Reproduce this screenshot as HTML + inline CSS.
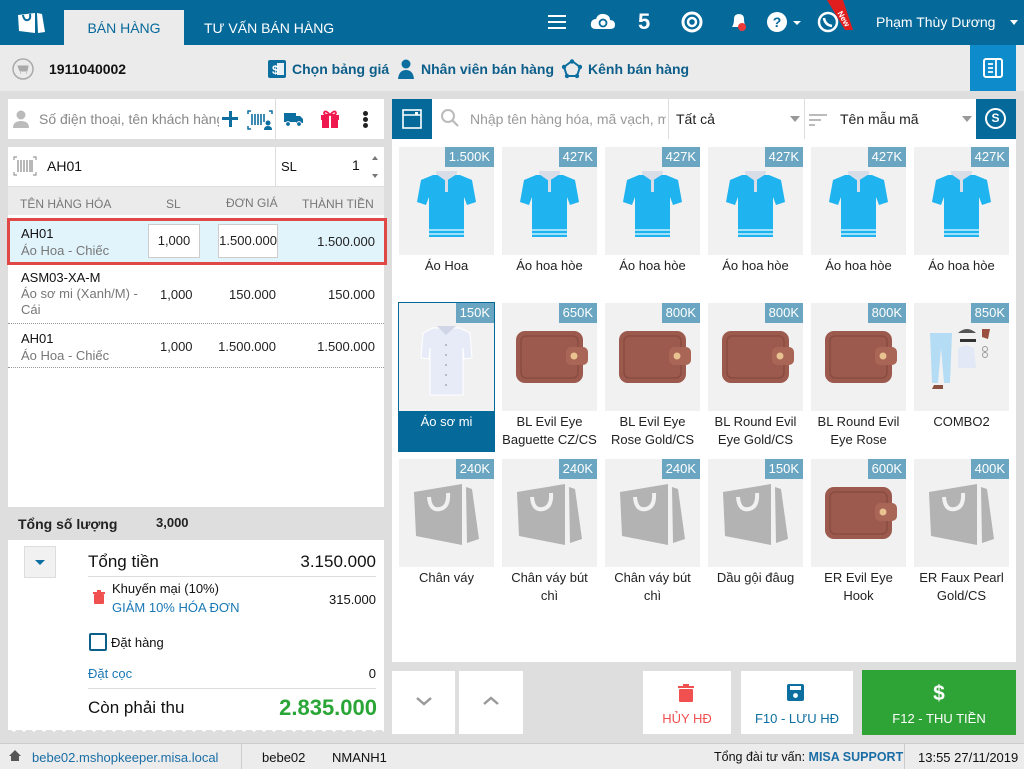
<!DOCTYPE html>
<html><head><meta charset="utf-8">
<style>
*{box-sizing:border-box;margin:0;padding:0}
body{width:1024px;height:769px;position:relative;overflow:hidden;background:#dedede;font-family:"Liberation Sans",sans-serif;font-size:13px;color:#222}
.a{position:absolute}
.hdr{left:0;top:0;width:1024px;height:45px;background:#05699a}
.t{white-space:nowrap}
.tile{position:absolute;width:95px;height:108px;background:#f1f1f1}
.tile .p{position:absolute;right:0;top:0;background:#6aa6c1;color:#fff;font-size:13px;padding:2px 4px;height:20px;line-height:16px}
.lbl{position:absolute;width:103px;text-align:center;font-size:13px;line-height:18px;color:#222}
</style></head><body>
<svg width="0" height="0" style="position:absolute">
<defs>
<symbol id="shirt" viewBox="0 0 95 108">
<path d="M34 28 L22 33 L18 55 L27 58 L30 50 L30 90 L65 90 L65 50 L68 58 L77 55 L73 33 L61 28 Z" fill="#1fb3ef"/>
<path d="M37 27 L47 34 L58 27 L58 24 L37 24Z" fill="#d8dde8"/>
<rect x="46" y="33" width="3" height="12" fill="#d8dde8"/>
<rect x="30" y="82" width="35" height="2" fill="#9fe0fa"/>
<rect x="30" y="86" width="35" height="2" fill="#9fe0fa"/>
</symbol>
<symbol id="wallet" viewBox="0 0 95 108">
<rect x="14" y="28" width="67" height="52" rx="9" fill="#9b5a4d"/>
<rect x="19" y="33" width="57" height="42" rx="5" fill="none" stroke="#8a4c40" stroke-width="1.5"/>
<rect x="64" y="44" width="22" height="18" rx="5" fill="#a96556"/>
<circle cx="72" cy="53" r="3.5" fill="#e8c28f"/>
</symbol>
<symbol id="bag" viewBox="0 0 95 108">
<path d="M15 33 L63 25 L63 86 L17 77Z" fill="#b3b3b3"/>
<path d="M67 28 L73 30 L80 80 L68 84Z" fill="#b3b3b3"/>
<path d="M30 38 Q31 52 41 50 Q50 48 49 34" fill="none" stroke="#f1f1f1" stroke-width="4"/>
</symbol>
</defs></svg>

<div class="a hdr"></div>
<svg class="a" style="left:18px;top:12px" width="28" height="22" viewBox="0 0 28 22"><path d="M0 3 L17 1 L17 21 L1 19Z" fill="#fff"/><path d="M19 1 L24 2 L27 20 L20 21Z" fill="#fff"/><path d="M5 3 Q6 9 10 8 Q13 7 12 2" fill="none" stroke="#05699a" stroke-width="2"/></svg>
<div class="a" style="left:64px;top:10px;width:120px;height:35px;background:#ebebeb;color:#05699a;font-size:14px;text-align:center;line-height:36px">BÁN HÀNG</div>
<div class="a t" style="left:204px;top:10px;color:#fff;font-size:14px;line-height:36px">TƯ VẤN BÁN HÀNG</div>
<div class="a" style="left:548px;top:15px;width:18px;height:2px;background:#fff;box-shadow:0 6px #fff,0 12px #fff"></div>
<svg class="a" style="left:590px;top:10px" width="26" height="24" viewBox="0 0 26 24"><path d="M6 19 Q0 19 1 13 Q2 9 6 9 Q8 3 14 4 Q20 5 20 10 Q25 10 25 15 Q25 19 20 19Z" fill="#fff"/><circle cx="13" cy="13" r="3.5" fill="none" stroke="#05699a" stroke-width="1.8"/></svg>
<div class="a" style="left:638px;top:9px;color:#fff;font-size:22px;font-weight:bold;line-height:26px">5</div>
<svg class="a" style="left:681px;top:11px" width="22" height="22" viewBox="0 0 22 22"><circle cx="11" cy="11" r="9" fill="none" stroke="#fff" stroke-width="3"/><circle cx="11" cy="11" r="4" fill="none" stroke="#fff" stroke-width="2.5"/></svg>
<svg class="a" style="left:728px;top:10px" width="22" height="22" viewBox="0 0 22 22"><path d="M4 17 Q6 14 6 9 Q6 4 11 4 Q16 4 16 9 Q16 14 18 17Z" fill="#fff"/><circle cx="14" cy="17" r="4" fill="#f03a3a"/></svg>
<svg class="a" style="left:766px;top:11px" width="22" height="22" viewBox="0 0 22 22"><circle cx="11" cy="11" r="10" fill="#fff"/><text x="11" y="16" text-anchor="middle" font-family="Liberation Sans" font-weight="bold" font-size="14" fill="#05699a">?</text></svg>
<div class="a" style="left:793px;top:21px;border:4px solid transparent;border-top:4px solid #fff"></div>
<svg class="a" style="left:815px;top:0" width="40" height="36" viewBox="0 0 40 36"><circle cx="13" cy="22" r="9" fill="none" stroke="#fff" stroke-width="2.5"/><path d="M9 18 Q10 25 17 26" stroke="#fff" stroke-width="2.5" fill="none"/><path d="M12 0 L28 0 L38 30 L30 30Z" fill="#e01e1e"/><text x="24" y="14" font-size="8" font-weight="bold" fill="#fff" font-family="Liberation Sans" transform="rotate(60 24 12)">New</text></svg>
<div class="a t" style="left:876px;top:14px;color:#fff;font-size:14px">Phạm Thùy Dương</div>
<div class="a" style="left:1010px;top:20px;border:4px solid transparent;border-top:5px solid #fff"></div>

<div class="a" style="left:0;top:45px;width:1024px;height:46px;background:#ebebeb"></div>
<svg class="a" style="left:12px;top:58px" width="22" height="22" viewBox="0 0 22 22"><circle cx="11" cy="11" r="10" fill="none" stroke="#aaa" stroke-width="1.5"/><path d="M6 8 L16 8 L15 13 L8 13Z M8 15 h1 M14 15 h1" stroke="#aaa" fill="#aaa"/></svg>
<div class="a t" style="left:49px;top:61px;font-size:14px;font-weight:bold;color:#111">1911040002</div>
<svg class="a" style="left:268px;top:60px" width="18" height="18"><rect width="18" height="18" rx="2" fill="#0d6ea0"/><rect x="9" y="3" width="7" height="12" fill="#fff" opacity=".9"/><text x="4" y="14" font-size="12" fill="#fff" font-weight="bold" font-family="Liberation Sans">$</text></svg>
<div class="a t" style="left:292px;top:61px;font-size:14px;color:#0d5e8a;font-weight:bold;">Chọn bảng giá</div>
<svg class="a" style="left:398px;top:59px" width="16" height="20"><circle cx="8" cy="5" r="4.5" fill="#0d6ea0"/><path d="M0 20 Q1 11 8 11 Q15 11 16 20Z" fill="#0d6ea0"/></svg>
<div class="a t" style="left:421px;top:61px;font-size:14px;color:#0d5e8a;font-weight:bold">Nhân viên bán hàng</div>
<svg class="a" style="left:562px;top:59px" width="20" height="20"><path d="M10 2 L18 8 L15 17 L5 17 L2 8Z" fill="none" stroke="#0d6ea0" stroke-width="2"/><circle cx="10" cy="2.5" r="2.2" fill="#0d6ea0"/><circle cx="18" cy="8" r="2.2" fill="#0d6ea0"/><circle cx="15" cy="17" r="2.2" fill="#0d6ea0"/><circle cx="5" cy="17" r="2.2" fill="#0d6ea0"/><circle cx="2" cy="8" r="2.2" fill="#0d6ea0"/></svg>
<div class="a t" style="left:588px;top:61px;font-size:14px;color:#0d5e8a;font-weight:bold">Kênh bán hàng</div>
<div class="a" style="left:970px;top:45px;width:46px;height:46px;background:#0d8bcb"></div>
<svg class="a" style="left:983px;top:58px" width="20" height="20"><rect x="1" y="1" width="18" height="18" rx="2" fill="none" stroke="#fff" stroke-width="2"/><path d="M13 1 V19 M5 6 H10 M5 10 H10 M5 14 H10" stroke="#fff" stroke-width="1.8"/></svg>

<!-- left panel -->
<div class="a" style="left:8px;top:99px;width:376px;height:40px;background:#fff"></div>
<div class="a" style="left:275px;top:99px;width:1px;height:40px;background:#ddd"></div>
<svg class="a" style="left:13px;top:110px" width="16" height="18"><circle cx="8" cy="5" r="4.5" fill="#bbb"/><path d="M0 18 Q0 11 8 11 Q16 11 16 18Z" fill="#bbb"/></svg>
<div class="a t" style="left:39px;top:111px;color:#888;font-size:14px;width:180px;overflow:hidden">Số điện thoại, tên khách hàng</div>
<div class="a" style="left:222px;top:117px;width:16px;height:3px;background:#0d6ea0"></div>
<div class="a" style="left:228.5px;top:111px;width:3px;height:16px;background:#0d6ea0"></div>
<svg class="a" style="left:247px;top:110px" width="26" height="20"><path d="M1 4 V1 H4 M1 16 V19 H4 M22 1 H25 V4" stroke="#0d6ea0" fill="none" stroke-width="1.5"/><path d="M5 4 V15 M8 4 V15 M11 4 V15 M14 4 V15 M17 4 V12" stroke="#0d6ea0" stroke-width="1.6"/><circle cx="21" cy="13" r="2.5" fill="#0d6ea0"/><path d="M17 20 Q17 16 21 16 Q25 16 25 20Z" fill="#0d6ea0"/></svg>
<svg class="a" style="left:284px;top:112px" width="20" height="15"><rect x="0" y="1" width="12" height="9" fill="#0d6ea0"/><path d="M12 4 H16 L19 7 V11 H12Z" fill="#0d6ea0"/><circle cx="4" cy="12" r="2.4" fill="#0d6ea0" stroke="#fff"/><circle cx="15" cy="12" r="2.4" fill="#0d6ea0" stroke="#fff"/></svg>
<svg class="a" style="left:320px;top:109px" width="20" height="19"><rect x="1" y="6" width="18" height="5" fill="#f0194f"/><rect x="2" y="11" width="16" height="8" fill="#f0194f"/><rect x="9" y="6" width="2" height="13" fill="#fff"/><path d="M10 6 Q5 0 4 4 Q4 6 10 6 Q15 0 16 4 Q16 6 10 6" fill="none" stroke="#f0194f" stroke-width="1.8"/></svg>
<div class="a" style="left:363px;top:111px;width:5px;height:5px;border-radius:50%;background:#222;box-shadow:0 6px #222,0 12px #222"></div>

<div class="a" style="left:8px;top:147px;width:376px;height:360px;background:#fff"></div>
<div class="a" style="left:275px;top:147px;width:1px;height:39px;background:#ddd"></div>
<svg class="a" style="left:13px;top:156px" width="24" height="20"><path d="M1 4 V1 H4 M1 16 V19 H4 M20 1 H23 V4 M20 19 H23 V16" stroke="#999" fill="none" stroke-width="1.2"/><path d="M5 4 V16 M8 4 V16 M11 4 V16 M14 4 V16 M17 4 V16 M19 4 V16" stroke="#999" stroke-width="1.4"/></svg>
<div class="a t" style="left:47px;top:158px;font-size:14px;color:#111">AH01</div>
<div class="a t" style="left:281px;top:159px;font-size:13px;color:#111">SL</div>
<div class="a t" style="left:352px;top:157px;font-size:14px;color:#111">1</div>
<div class="a" style="left:372px;top:153px;border:3px solid transparent;border-bottom:4px solid #777"></div>
<div class="a" style="left:372px;top:174px;border:3px solid transparent;border-top:4px solid #777"></div>
<div class="a" style="left:8px;top:186px;width:376px;height:29px;background:#ebebeb;border-top:1px solid #ddd"></div>
<div class="a t" style="left:20px;top:197px;font-size:12px;color:#777">TÊN HÀNG HÓA</div>
<div class="a t" style="left:166px;top:197px;font-size:12px;color:#777">SL</div>
<div class="a t" style="left:226px;top:196px;font-size:12px;color:#777">ĐƠN GIÁ</div>
<div class="a t" style="left:302px;top:197px;font-size:12px;color:#777">THÀNH TIỀN</div>
<div class="a" style="left:7px;top:218px;width:380px;height:47px;background:#e1f4fc;border:3px solid #e04848"></div>
<div class="a t" style="left:21px;top:226px;font-size:13px;color:#111">AH01</div>
<div class="a t" style="left:21px;top:243px;font-size:13px;color:#777">Áo Hoa - Chiếc</div>
<div class="a" style="left:148px;top:224px;width:52px;height:34px;background:#fff;border:1px solid #ccc;text-align:center;line-height:32px;font-size:13px">1,000</div>
<div class="a" style="left:218px;top:224px;width:60px;height:34px;background:#fff;border:1px solid #ccc;text-align:right;line-height:32px;font-size:13px">1.500.000</div>
<div class="a t" style="left:300px;top:234px;width:75px;text-align:right;font-size:13px">1.500.000</div>
<div class="a t" style="left:21px;top:270px;font-size:13px;color:#111">ASM03-XA-M</div>
<div class="a" style="left:21px;top:286px;font-size:13px;color:#777;line-height:16px;width:120px">Áo sơ mi (Xanh/M) - Cái</div>
<div class="a t" style="left:160px;top:287px;font-size:13px">1,000</div>
<div class="a t" style="left:200px;top:287px;width:76px;text-align:right;font-size:13px">150.000</div>
<div class="a t" style="left:300px;top:287px;width:75px;text-align:right;font-size:13px">150.000</div>
<div class="a" style="left:8px;top:323px;width:376px;border-top:1px dotted #999"></div>
<div class="a t" style="left:21px;top:331px;font-size:13px;color:#111">AH01</div>
<div class="a t" style="left:21px;top:348px;font-size:13px;color:#777">Áo Hoa - Chiếc</div>
<div class="a t" style="left:160px;top:339px;font-size:13px">1,000</div>
<div class="a t" style="left:200px;top:339px;width:76px;text-align:right;font-size:13px">1.500.000</div>
<div class="a t" style="left:300px;top:339px;width:75px;text-align:right;font-size:13px">1.500.000</div>
<div class="a" style="left:8px;top:367px;width:376px;border-top:1px dotted #999"></div>

<div class="a t" style="left:18px;top:516px;font-size:14px;font-weight:bold;color:#222">Tổng số lượng</div>
<div class="a t" style="left:156px;top:515px;font-size:13px;font-weight:bold;color:#222">3,000</div>
<div class="a" style="left:8px;top:540px;width:376px;height:190px;background:#fff"></div>
<svg class="a" style="left:8px;top:728px" width="376" height="8"><path d="M0 0 H376 V4 L371 0 L366 4 L361 0 L356 4 L351 0 L346 4 L341 0 L336 4 L331 0 L326 4 L321 0 L316 4 L311 0 L306 4 L301 0 L296 4 L291 0 L286 4 L281 0 L276 4 L271 0 L266 4 L261 0 L256 4 L251 0 L246 4 L241 0 L236 4 L231 0 L226 4 L221 0 L216 4 L211 0 L206 4 L201 0 L196 4 L191 0 L186 4 L181 0 L176 4 L171 0 L166 4 L161 0 L156 4 L151 0 L146 4 L141 0 L136 4 L131 0 L126 4 L121 0 L116 4 L111 0 L106 4 L101 0 L96 4 L91 0 L86 4 L81 0 L76 4 L71 0 L66 4 L61 0 L56 4 L51 0 L46 4 L41 0 L36 4 L31 0 L26 4 L21 0 L16 4 L11 0 L6 4 L0 0Z" fill="#fff"/></svg>
<div class="a" style="left:24px;top:546px;width:32px;height:32px;background:#f1f1f1;border:1px solid #ddd"></div>
<div class="a" style="left:35px;top:560px;border:5px solid transparent;border-top:5px solid #0d6ea0"></div>
<div class="a t" style="left:88px;top:552px;font-size:17px;color:#111">Tổng tiền</div>
<div class="a t" style="left:270px;top:552px;width:106px;text-align:right;font-size:17px;color:#111">3.150.000</div>
<div class="a" style="left:88px;top:576px;width:288px;border-top:1px solid #ddd"></div>
<svg class="a" style="left:93px;top:590px" width="12" height="14"><rect x="0" y="2" width="12" height="2" fill="#f05050"/><rect x="4" y="0" width="4" height="2" fill="#f05050"/><rect x="1" y="4" width="10" height="10" rx="1" fill="#f05050"/></svg>
<div class="a t" style="left:112px;top:581px;font-size:13px;color:#111">Khuyến mại (10%)</div>
<div class="a t" style="left:112px;top:600px;font-size:13px;color:#1a78b5">GIẢM 10% HÓA ĐƠN</div>
<div class="a t" style="left:300px;top:592px;width:76px;text-align:right;font-size:13px;color:#111">315.000</div>
<div class="a" style="left:89px;top:633px;width:18px;height:18px;border:2px solid #0d5e8a;border-radius:2px"></div>
<div class="a t" style="left:111px;top:635px;font-size:13px;color:#111">Đặt hàng</div>
<div class="a t" style="left:88px;top:666px;font-size:13px;color:#1a78b5">Đặt cọc</div>
<div class="a t" style="left:300px;top:666px;width:76px;text-align:right;font-size:13px;color:#111">0</div>
<div class="a" style="left:88px;top:688px;width:288px;border-top:1px solid #ddd"></div>
<div class="a t" style="left:88px;top:698px;font-size:17px;color:#111">Còn phải thu</div>
<div class="a t" style="left:230px;top:695px;width:147px;text-align:right;font-size:22px;font-weight:bold;color:#2aa636">2.835.000</div>

<!-- right panel -->
<div class="a" style="left:392px;top:99px;width:624px;height:40px;background:#fff"></div>
<div class="a" style="left:392px;top:99px;width:40px;height:40px;background:#05699a"></div>
<svg class="a" style="left:402px;top:109px" width="20" height="20"><rect x="1" y="1" width="18" height="18" fill="none" stroke="#fff" stroke-width="1.6"/><path d="M1 6 H19" stroke="#fff" stroke-width="1.6"/><rect x="13" y="3" width="3" height="3" fill="#fff"/></svg>
<svg class="a" style="left:441px;top:109px" width="18" height="18"><circle cx="7" cy="7" r="6" fill="none" stroke="#bbb" stroke-width="2"/><path d="M11.5 11.5 L17 17" stroke="#bbb" stroke-width="2.2"/></svg>
<div class="a t" style="left:470px;top:111px;font-size:14px;color:#999;width:196px;overflow:hidden">Nhập tên hàng hóa, mã vạch, mã</div>
<div class="a" style="left:668px;top:99px;width:1px;height:40px;background:#ddd"></div>
<div class="a t" style="left:676px;top:111px;font-size:14px;color:#222">Tất cả</div>
<div class="a" style="left:790px;top:116px;border:5px solid transparent;border-top:6px solid #999"></div>
<div class="a" style="left:804px;top:99px;width:1px;height:40px;background:#ddd"></div>
<div class="a" style="left:809px;top:114px;width:18px;height:2px;background:#bbb"></div>
<div class="a" style="left:809px;top:119px;width:12px;height:2px;background:#bbb"></div>
<div class="a" style="left:809px;top:124px;width:6px;height:2px;background:#bbb"></div>
<div class="a t" style="left:840px;top:111px;font-size:14px;color:#222">Tên mẫu mã</div>
<div class="a" style="left:962px;top:116px;border:5px solid transparent;border-top:6px solid #999"></div>
<div class="a" style="left:976px;top:99px;width:40px;height:40px;background:#05699a"></div>
<div class="a" style="left:985px;top:108px;width:21px;height:21px;border:2px solid #fff;border-radius:50%;color:#fff;font-size:12px;font-weight:bold;text-align:center;line-height:17px">S</div>

<div class="a" style="left:392px;top:139px;width:624px;height:523px;background:#fff"></div>

<!-- row 1 -->
<div class="tile" style="left:399px;top:147px"><svg width="95" height="108"><use href="#shirt"/></svg><div class="p">1.500K</div></div>
<div class="tile" style="left:502px;top:147px"><svg width="95" height="108"><use href="#shirt"/></svg><div class="p">427K</div></div>
<div class="tile" style="left:605px;top:147px"><svg width="95" height="108"><use href="#shirt"/></svg><div class="p">427K</div></div>
<div class="tile" style="left:708px;top:147px"><svg width="95" height="108"><use href="#shirt"/></svg><div class="p">427K</div></div>
<div class="tile" style="left:811px;top:147px"><svg width="95" height="108"><use href="#shirt"/></svg><div class="p">427K</div></div>
<div class="tile" style="left:914px;top:147px"><svg width="95" height="108"><use href="#shirt"/></svg><div class="p">427K</div></div>
<div class="lbl" style="left:395px;top:257px">Áo Hoa</div>
<div class="lbl" style="left:498px;top:257px">Áo hoa hòe</div>
<div class="lbl" style="left:601px;top:257px">Áo hoa hòe</div>
<div class="lbl" style="left:704px;top:257px">Áo hoa hòe</div>
<div class="lbl" style="left:807px;top:257px">Áo hoa hòe</div>
<div class="lbl" style="left:910px;top:257px">Áo hoa hòe</div>

<!-- row 2 -->
<div class="a" style="left:398px;top:302px;width:97px;height:150px;background:#05699a"></div>
<div class="tile" style="left:399px;top:303px">
<svg width="95" height="108" viewBox="0 0 95 108"><path d="M34 25 L24 30 L22 55 L30 56 L31 45 L31 92 L64 92 L64 45 L65 56 L73 55 L71 30 L61 25Z" fill="#e6ebf7" stroke="#fff"/><path d="M38 23 L47 32 L57 23Z" fill="#d0d6e6"/><g fill="#aab"><circle cx="47" cy="42" r="1"/><circle cx="47" cy="52" r="1"/><circle cx="47" cy="62" r="1"/><circle cx="47" cy="72" r="1"/><circle cx="47" cy="82" r="1"/></g></svg><div class="p">150K</div></div>
<div class="tile" style="left:502px;top:303px"><svg width="95" height="108"><use href="#wallet"/></svg><div class="p">650K</div></div>
<div class="tile" style="left:605px;top:303px"><svg width="95" height="108"><use href="#wallet"/></svg><div class="p">800K</div></div>
<div class="tile" style="left:708px;top:303px"><svg width="95" height="108"><use href="#wallet"/></svg><div class="p">800K</div></div>
<div class="tile" style="left:811px;top:303px"><svg width="95" height="108"><use href="#wallet"/></svg><div class="p">800K</div></div>
<div class="tile" style="left:914px;top:303px">
<svg width="95" height="108" viewBox="0 0 95 108"><path d="M16 30 H38 L36 80 H30 L27 45 L24 80 H18Z" fill="#b5dcf5"/><path d="M20 82 H29 V86 H18Z" fill="#8a5040"/><path d="M44 30 Q53 22 62 30Z" fill="#555"/><rect x="46" y="36" width="16" height="3" fill="#333"/><path d="M44 45 L52 42 L60 45 L62 65 L44 65Z" fill="#e3e8f6"/><path d="M68 26 L76 26 L74 36 L68 34Z" fill="#9b4f3e"/><circle cx="71" cy="46" r="2.5" fill="none" stroke="#999"/><circle cx="71" cy="52" r="2.5" fill="none" stroke="#999"/></svg><div class="p">850K</div></div>
<div class="lbl" style="left:395px;top:413px;color:#fff;width:103px">Áo sơ mi</div>
<div class="lbl" style="left:498px;top:413px">BL Evil Eye<br>Baguette CZ/CS</div>
<div class="lbl" style="left:601px;top:413px">BL Evil Eye<br>Rose Gold/CS</div>
<div class="lbl" style="left:704px;top:413px">BL Round Evil<br>Eye Gold/CS</div>
<div class="lbl" style="left:807px;top:413px">BL Round Evil<br>Eye Rose</div>
<div class="lbl" style="left:910px;top:413px">COMBO2</div>

<!-- row 3 -->
<div class="tile" style="left:399px;top:459px"><svg width="95" height="108"><use href="#bag"/></svg><div class="p">240K</div></div>
<div class="tile" style="left:502px;top:459px"><svg width="95" height="108"><use href="#bag"/></svg><div class="p">240K</div></div>
<div class="tile" style="left:605px;top:459px"><svg width="95" height="108"><use href="#bag"/></svg><div class="p">240K</div></div>
<div class="tile" style="left:708px;top:459px"><svg width="95" height="108"><use href="#bag"/></svg><div class="p">150K</div></div>
<div class="tile" style="left:811px;top:459px"><svg width="95" height="108"><use href="#wallet"/></svg><div class="p">600K</div></div>
<div class="tile" style="left:914px;top:459px"><svg width="95" height="108"><use href="#bag"/></svg><div class="p">400K</div></div>
<div class="lbl" style="left:395px;top:569px">Chân váy</div>
<div class="lbl" style="left:498px;top:569px">Chân váy bút<br>chì</div>
<div class="lbl" style="left:601px;top:569px">Chân váy bút<br>chì</div>
<div class="lbl" style="left:704px;top:569px">Dầu gội đâug</div>
<div class="lbl" style="left:807px;top:569px">ER Evil Eye<br>Hook</div>
<div class="lbl" style="left:910px;top:569px">ER Faux Pearl<br>Gold/CS</div>

<!-- bottom buttons -->
<div class="a" style="left:392px;top:671px;width:63px;height:63px;background:#fff"></div>
<div class="a" style="left:459px;top:671px;width:64px;height:63px;background:#fff"></div>
<svg class="a" style="left:415px;top:695px" width="18" height="12"><path d="M2 3 L9 9 L16 3" stroke="#999" stroke-width="2.4" fill="none"/></svg>
<svg class="a" style="left:482px;top:695px" width="18" height="12"><path d="M2 9 L9 3 L16 9" stroke="#999" stroke-width="2.4" fill="none"/></svg>
<div class="a" style="left:643px;top:671px;width:88px;height:63px;background:#fff"></div>
<svg class="a" style="left:678px;top:684px" width="16" height="18"><rect x="0" y="2" width="16" height="2" fill="#f05050"/><rect x="5" y="0" width="6" height="2" fill="#f05050"/><rect x="1" y="5" width="14" height="13" rx="1" fill="#f05050"/></svg>
<div class="a t" style="left:643px;top:711px;width:88px;text-align:center;font-size:13px;color:#f05050">HỦY HĐ</div>
<div class="a" style="left:741px;top:671px;width:112px;height:63px;background:#fff"></div>
<svg class="a" style="left:787px;top:684px" width="17" height="17"><rect width="17" height="17" rx="2" fill="#0d6ea0"/><rect x="3" y="2" width="11" height="4" fill="#fff"/><circle cx="8.5" cy="11.5" r="2.4" fill="#fff"/></svg>
<div class="a t" style="left:741px;top:711px;width:112px;text-align:center;font-size:13px;color:#0d6ea0">F10 - LƯU HĐ</div>
<div class="a" style="left:862px;top:670px;width:154px;height:65px;background:#2ea336"></div>
<div class="a t" style="left:862px;top:682px;width:154px;text-align:center;font-size:21px;color:#fff;font-weight:bold">$</div>
<div class="a t" style="left:862px;top:711px;width:154px;text-align:center;font-size:13px;color:#fff">F12 - THU TIỀN</div>

<!-- status bar -->
<div class="a" style="left:0;top:743px;width:1024px;height:26px;background:#ececec;border-top:1px solid #ccc"></div>
<div class="a" style="left:241px;top:744px;width:1px;height:25px;background:#ccc"></div>
<div class="a" style="left:904px;top:744px;width:1px;height:25px;background:#ccc"></div>
<svg class="a" style="left:9px;top:750px" width="12" height="11"><path d="M0 6 L6 0 L12 6 H10 V11 H2 V6Z" fill="#555"/></svg>
<div class="a t" style="left:32px;top:750px;font-size:13px;color:#1a6ea5">bebe02.mshopkeeper.misa.local</div>
<div class="a t" style="left:262px;top:750px;font-size:13px;color:#111">bebe02</div>
<div class="a t" style="left:332px;top:750px;font-size:13px;color:#111">NMANH1</div>
<div class="a t" style="left:714px;top:750px;font-size:12.5px;color:#111">Tổng đài tư vấn: <b style="color:#1a6ea5">MISA SUPPORT</b></div>
<div class="a t" style="left:918px;top:750px;font-size:13px;color:#111">13:55 27/11/2019</div>
</body></html>
